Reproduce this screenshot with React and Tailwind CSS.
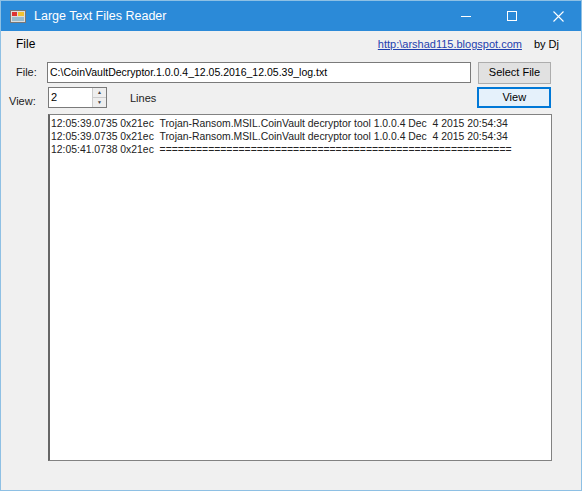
export default function App() {
  const f = { fontFamily: '"Liberation Sans", Arial, sans-serif' };
  const lines = [
    "12:05:39.0735 0x21ec  Trojan-Ransom.MSIL.CoinVault decryptor tool 1.0.0.4 Dec  4 2015 20:54:34",
    "12:05:39.0735 0x21ec  Trojan-Ransom.MSIL.CoinVault decryptor tool 1.0.0.4 Dec  4 2015 20:54:34",
    "12:05:41.0738 0x21ec  ==========================================================",
  ];
  return (
    <div style={f} className="w-[582px] h-[491px] border border-[#8ec0e4] bg-[#f0f0f0] flex flex-col text-[12px] text-black overflow-hidden">
      <div className="h-[30px] bg-[#2b8ad8] flex items-center text-white shrink-0">
        <svg width="16" height="16" viewBox="0 0 16 16" className="ml-[9px]">
          <rect x="0.5" y="2.5" width="15" height="12" fill="#ddd" stroke="#777" />
          <rect x="2" y="4" width="5" height="4" fill="#d33" />
          <rect x="8" y="4" width="6" height="4" fill="#f2c230" />
          <rect x="2" y="9" width="12" height="4" fill="#9bc" />
        </svg>
        <span className="ml-[8px] text-[12.5px]">Large Text Files Reader</span>
        <div className="ml-auto flex h-full">
          <div className="w-[46px] flex items-center justify-center"><div className="w-[10px] h-px bg-white" /></div>
          <div className="w-[46px] flex items-center justify-center"><div className="w-[10px] h-[10px] border border-white" /></div>
          <div className="w-[46px] flex items-center justify-center">
            <svg width="11" height="11" viewBox="0 0 11 11"><path d="M0.5 0.5L10.5 10.5M10.5 0.5L0.5 10.5" stroke="white" strokeWidth="1.1" /></svg>
          </div>
        </div>
      </div>
      <div className="h-[26px] flex items-center shrink-0">
        <span className="ml-[15px] text-[12px]">File</span>
        <a className="ml-auto text-[11px] text-[#1f3fae] underline">http:\arshad115.blogspot.com</a>
        <span className="ml-[12px] mr-[22px] text-[11px]">by Dj</span>
      </div>
      <div className="flex items-center mt-[5px] h-[21px]">
        <span className="ml-[15px] w-[31px] text-[11px] text-[#222]">File:</span>
        <div className="w-[424px] h-[21px] bg-white border border-[#7a7a7a] text-[10.5px] flex items-center pl-[2px] whitespace-nowrap">
          C:\CoinVaultDecryptor.1.0.0.4_12.05.2016_12.05.39_log.txt
        </div>
        <div className="ml-[7px] w-[73px] h-[22px] bg-[#e1e1e1] border border-[#adadad] text-[11px] flex items-center justify-center">Select File</div>
      </div>
      <div className="flex items-start mt-[4px] h-[21px]">
        <span className="ml-[8px] w-[39px] mt-[6px] text-[11px] text-[#222]">View:</span>
        <div className="w-[59px] h-[21px] bg-white border border-[#7a7a7a] flex">
          <span className="pl-[2px] text-[11px] leading-[19px] flex-1">2</span>
          <div className="w-[14px] flex flex-col border-l border-[#ccc] bg-[#eee]">
            <div className="flex-1 flex items-center justify-center text-[5px] text-[#444] border-b border-[#ccc]">▲</div>
            <div className="flex-1 flex items-center justify-center text-[5px] text-[#444]">▼</div>
          </div>
        </div>
        <span className="ml-[23px] mt-[3px] text-[11px] text-[#222]">Lines</span>
        <div className="ml-[321px] w-[74px] h-[21px] bg-[#e5f1fb] border-2 border-[#0078d7] text-[11px] flex items-center justify-center">View</div>
      </div>
      <div className="ml-[47px] mt-[6px] w-[504px] h-[347px] bg-white border border-[#828282] border-l-[#666] border-l-2 pt-[2px] pl-[1px] text-[10.4px] leading-[13px] text-[#222] whitespace-pre">
        {lines.map((l, i) => <div key={i}>{l}</div>)}
      </div>
    </div>
  );
}
